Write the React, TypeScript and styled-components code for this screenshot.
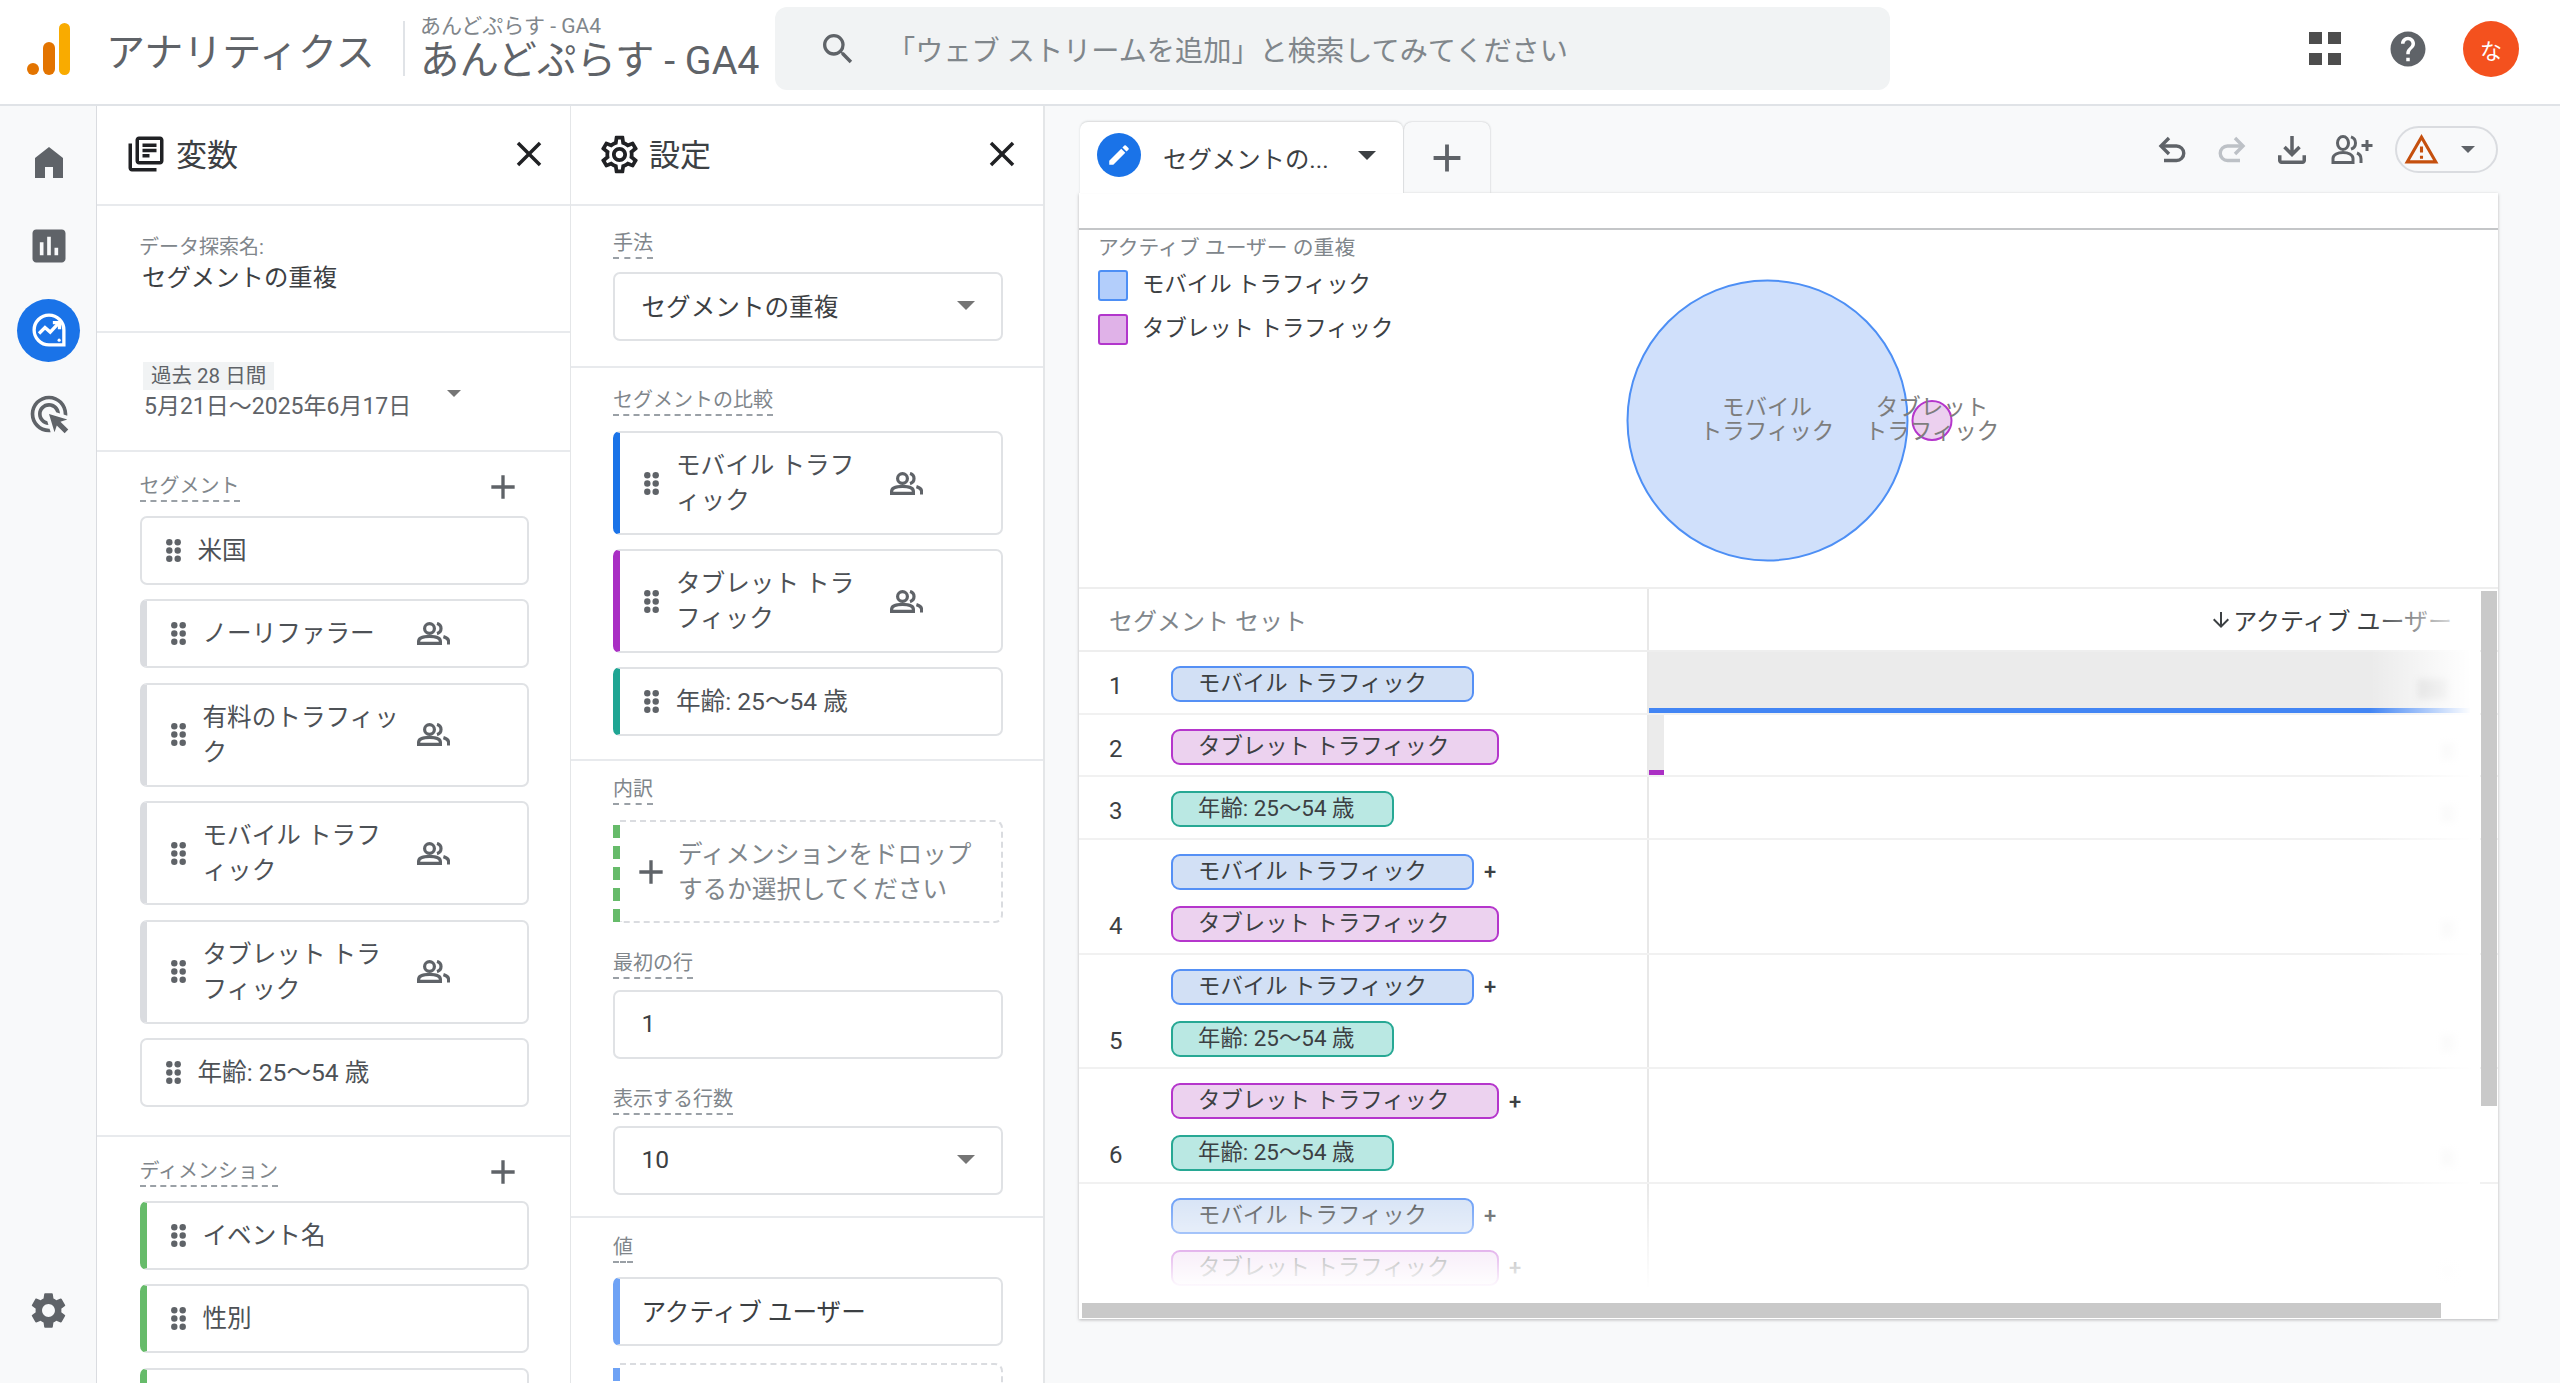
import React, { FC, ReactNode } from 'react';
import styled, { createGlobalStyle, css } from 'styled-components';
import {
  MdInsertChart,
  MdSettings,
  MdClose,
  MdAdd,
  MdSearch,
  MdHelp,
  MdOutlineFileDownload,
  MdOutlineLibraryBooks,
  MdOutlineSettings,
  MdEdit,
  MdArrowDownward,
  MdOutlineWarningAmber,
} from 'react-icons/md';

const GlobalStyle = createGlobalStyle`
  html, body {
    margin: 0;
    padding: 0;
    width: 2560px;
    height: 1383px;
    overflow: hidden;
    background: #fff;
    font-family: Roboto, "Noto Sans CJK JP", sans-serif;
    color: #3c4043;
  }
  * { box-sizing: border-box; }
`;

const Page = styled.div`
  display: flex;
  flex-direction: column;
  width: 2560px;
  height: 1383px;
  overflow: hidden;
`;

/* top bar */
const TopBar = styled.header`
  display: flex;
  align-items: center;
  flex: 0 0 106px;
  padding: 0 41px 7px 27px;
  border-bottom: 2px solid #e0e3e7;
`;

const ProductName = styled.div`
  margin-left: 36px;
  width: 297px;
  font-size: 39px;
  color: #5f6368;
  white-space: nowrap;
`;

const TopDivider = styled.div`
  width: 2px;
  height: 55px;
  background: #e0e3e7;
`;

const Account = styled.div`
  display: flex;
  flex-direction: column;
  width: 370px;
  padding-left: 15px;
`;

const AccountSmall = styled.div`
  font-size: 21px;
  line-height: 24px;
  color: #80868b;
  white-space: nowrap;
`;

const AccountBig = styled.div`
  font-size: 39.4px;
  line-height: 46px;
  color: #5f6368;
  white-space: nowrap;
`;

const SearchBox = styled.div`
  display: flex;
  align-items: center;
  width: 1115px;
  height: 83px;
  padding-left: 43px;
  background: #f1f3f4;
  border-radius: 12px;
  color: #5f6368;
`;

const SearchText = styled.span`
  margin-left: 29px;
  font-size: 28.2px;
  color: #80868b;
  white-space: nowrap;
`;

const TopRight = styled.div`
  display: flex;
  align-items: center;
  margin-left: auto;
  color: #5f6368;
`;

const HelpIcon = styled(MdHelp)`
  margin: 0 34px 0 46px;
`;

const Avatar = styled.div`
  display: flex;
  align-items: center;
  justify-content: center;
  width: 56px;
  height: 56px;
  border-radius: 50%;
  background: #f4511e;
  color: #fff;
  font-size: 22px;
`;

/* body */
const Body = styled.div`
  display: flex;
  flex: 1;
  min-height: 0;
`;

const Rail = styled.nav`
  display: flex;
  flex-direction: column;
  flex: 0 0 97px;
  padding: 14px 0 31px 1px;
  background: #f8f9fa;
  border-right: 1px solid #dadce0;
  color: #5f6368;
`;

const RailSlot = styled.div<{ $bottom?: boolean }>`
  display: flex;
  align-items: center;
  justify-content: center;
  flex: 0 0 84px;
  ${(p) => p.$bottom && css`margin-top: auto;`}
`;

const ActiveCircle = styled.div`
  display: flex;
  align-items: center;
  justify-content: center;
  width: 63px;
  height: 63px;
  border-radius: 50%;
  background: #1a73e8;
`;

const SidePanel = styled.section<{ $w: number; $line: number }>`
  flex: 0 0 ${(p) => p.$w}px;
  height: 100%;
  overflow: hidden;
  background: #fff;
  border-right: ${(p) => p.$line}px solid #e4e6e8;
`;

const PanelHead = styled.div`
  display: flex;
  align-items: center;
  height: 100px;
  padding: 0 20px 2px 28px;
  border-bottom: 2px solid #e8eaed;
  color: #202124;
`;

const PanelTitle = styled.h2`
  flex: 1;
  margin: 0 0 4px 9px;
  font-size: 31px;
  font-weight: 400;
  color: #3c4043;
`;

const GearIcon = styled(MdOutlineSettings)`
  margin: 0 -2px;
`;

const Section = styled.div<{ $pt: number; $pb: number; $pl?: number; $pr?: number; $line?: boolean }>`
  padding: ${(p) => p.$pt}px ${(p) => p.$pr ?? 40}px ${(p) => p.$pb}px ${(p) => p.$pl ?? 42}px;
  ${(p) => p.$line && css`border-bottom: 2px solid #e8eaed;`}
`;

const SmallLabel = styled.div`
  font-size: 20px;
  line-height: 26px;
  color: #80868b;
`;

const ExploreName = styled.div`
  margin: 1px 0 2px 3px;
  font-size: 24.4px;
  line-height: 34px;
  color: #3c4043;
`;

const RangeChip = styled.div`
  width: fit-content;
  height: 28px;
  margin-left: 4px;
  padding: 0 8px;
  background: #f1f3f4;
  font-size: 20.5px;
  line-height: 28px;
  color: #5f6368;
`;

const DateRow = styled.div`
  display: flex;
  align-items: center;
  margin-left: 5px;
  font-size: 23px;
  line-height: 30px;
  color: #5f6368;
  white-space: nowrap;
`;

const Caret = styled.span<{ $w?: number; $color?: string }>`
  display: inline-block;
  flex: none;
  border-left: ${(p) => p.$w ?? 8}px solid transparent;
  border-right: ${(p) => p.$w ?? 8}px solid transparent;
  border-top: ${(p) => p.$w ?? 8}px solid ${(p) => p.$color ?? '#757575'};
`;

const DateCaret = styled(Caret)`
  margin: 0 0 26px 36px;
`;

const FieldHead = styled.div`
  display: flex;
  justify-content: space-between;
  height: 30px;
  margin-bottom: 14px;
`;

const FieldLabel = styled.div<{ $mt?: number; $mb?: number }>`
  width: fit-content;
  height: 30px;
  margin-top: ${(p) => p.$mt ?? 0}px;
  margin-bottom: ${(p) => p.$mb ?? 11}px;
  font-size: 20px;
  line-height: 28px;
  color: #80868b;
  white-space: nowrap;
  border-bottom: 2px dashed #9aa0a6;
`;

const HeadLabel = styled(FieldLabel)`
  margin-bottom: 0;
`;

const PlusIcon = styled(MdAdd)`
  align-self: center;
  margin-right: 6px;
  color: #5f6368;
`;

const CardList = styled.div<{ $gap: number }>`
  display: flex;
  flex-direction: column;
  gap: ${(p) => p.$gap}px;
`;

const Card = styled.div<{ $bar?: string }>`
  display: flex;
  align-items: center;
  padding: 15px 0 15px 24px;
  background: #fff;
  border: 2px solid #e0e2e5;
  border-left: ${(p) => (p.$bar ? `7px solid ${p.$bar}` : '2px solid #e0e2e5')};
  border-radius: 7px;
  color: #4d5156;
`;

const CardText = styled.div`
  flex: 0 0 206px;
  margin-left: 17px;
  font-size: 24.6px;
  line-height: 35px;
  white-space: nowrap;
`;

const SelectBox = styled.div<{ $bar?: string }>`
  display: flex;
  align-items: center;
  justify-content: space-between;
  height: 69px;
  padding: 0 26px 3px ${(p) => (p.$bar ? 21.5 : 26.5)}px;
  background: #fff;
  border: 2px solid #e0e2e5;
  border-left: ${(p) => (p.$bar ? `7px solid ${p.$bar}` : '2px solid #e0e2e5')};
  border-radius: 7px;
  font-size: 24.6px;
  color: #3c4043;
`;

const DropZone = styled.div<{ $h: number; $mt?: number }>`
  display: flex;
  align-items: stretch;
  height: ${(p) => p.$h}px;
  margin-top: ${(p) => p.$mt ?? 0}px;
`;

const DashBar = styled.div<{ $color: string }>`
  flex: 0 0 7px;
  margin-top: 5px;
  background: repeating-linear-gradient(
    to bottom,
    ${(p) => p.$color} 0 13px,
    transparent 13px 21px
  );
`;

const DropBody = styled.div`
  display: flex;
  align-items: center;
  flex: 1;
  padding-left: 11px;
  border: 2px dashed #dadce0;
  border-left: 0;
  border-radius: 0 8px 8px 0;
  color: #5f6368;
`;

const DropText = styled.div`
  margin-left: 7px;
  font-size: 24.6px;
  line-height: 35px;
  color: #80868b;
  white-space: nowrap;
`;

/* main area */
const Main = styled.main`
  flex: 1;
  min-width: 0;
  padding: 16px 62px 0 34px;
  background: #f8f9fa;
`;

const TabRow = styled.div`
  display: flex;
  align-items: flex-start;
  height: 71px;
`;

const ActiveTab = styled.div`
  position: relative;
  z-index: 1;
  display: flex;
  align-items: center;
  width: 323px;
  height: 71px;
  margin-left: 1px;
  padding: 0 27px 5px 17px;
  background: #fff;
  border-radius: 8px 8px 0 0;
  box-shadow: 0 -1px 2px rgba(60, 64, 67, 0.18);
`;

const PencilCircle = styled.div`
  display: flex;
  align-items: center;
  justify-content: center;
  flex: none;
  width: 44px;
  height: 44px;
  border-radius: 50%;
  background: #1a73e8;
  color: #fff;
`;

const TabText = styled.span`
  flex: 1;
  margin: 4px 0 0 22px;
  font-size: 24.4px;
  color: #3c4043;
  white-space: nowrap;
`;

const AddTab = styled.div`
  display: flex;
  align-items: center;
  justify-content: center;
  width: 86px;
  height: 71px;
  margin-left: 1px;
  background: #f8f9fa;
  border-radius: 8px 8px 0 0;
  box-shadow: 0 0 2px rgba(60, 64, 67, 0.35);
  color: #5f6368;
`;

const Toolbar = styled.div`
  display: flex;
  align-items: center;
  height: 47px;
  margin: 4px 0 0 auto;
  color: #5f6368;
`;

const ToolSlot = styled.div<{ $off?: boolean }>`
  display: flex;
  align-items: center;
  justify-content: center;
  width: 60px;
  color: ${(p) => (p.$off ? '#bdc1c6' : '#5f6368')};
`;

const StatusPill = styled.div`
  display: flex;
  align-items: center;
  width: 103px;
  height: 47px;
  margin-left: 13px;
  padding-left: 6px;
  border: 2px solid #dadce0;
  border-radius: 24px;
  color: #c5500e;
`;

const PillCaret = styled(Caret)`
  margin-left: 21px;
`;

const ChartCard = styled.div`
  position: relative;
  height: 1126px;
  overflow: hidden;
  background: #fff;
  box-shadow: 0 1px 3px rgba(60, 64, 67, 0.35);
`;

const TopStrip = styled.div`
  height: 37px;
  border-bottom: 2px solid #c4c6c8;
`;

const VennArea = styled.div`
  display: flex;
  height: 359px;
  border-bottom: 2px solid #eeeeee;
`;

const LegendCol = styled.div`
  flex: 0 0 440px;
  padding: 7px 0 0 19px;
`;

const LegendTitle = styled.div`
  margin-bottom: 11px;
  font-size: 20.8px;
  line-height: 22px;
  color: #80868b;
  white-space: nowrap;
`;

const LegendItem = styled.div`
  display: flex;
  align-items: center;
  gap: 14px;
  height: 31px;
  margin-bottom: 13px;
  font-size: 22.4px;
  line-height: 28px;
  color: #3c4043;
  white-space: nowrap;
`;

const LegendLabel = styled.span`
  margin-bottom: 3px;
`;

const Swatch = styled.span<{ $fill: string; $line: string }>`
  flex: 0 0 30px;
  height: 31px;
  background: ${(p) => p.$fill};
  border: 2px solid ${(p) => p.$line};
  border-radius: 3px;
`;

const VennText = styled.text`
  font-size: 22.5px;
  fill: #7d7d7d;
  text-anchor: middle;
`;

const SetTable = styled.div`
  position: relative;
`;

const HeadRow = styled.div`
  display: grid;
  grid-template-columns: 568px 1fr;
  height: 63px;
  border-bottom: 2px solid #eeeeee;
`;

const SetHead = styled.div`
  display: flex;
  align-items: center;
  padding-left: 30px;
  font-size: 24px;
  color: #80868b;
`;

const MetricHead = styled.div`
  display: flex;
  align-items: center;
  justify-content: flex-end;
  padding-right: 46px;
  border-left: 2px solid #e8e8e8;
  font-size: 24px;
  color: #3c4043;
  white-space: nowrap;
`;

const DataRow = styled.div`
  display: grid;
  grid-template-columns: 568px 1fr;
  border-bottom: 2px solid #f1f1f1;
`;

const SetCell = styled.div`
  display: flex;
  align-items: flex-end;
  padding: 14px 0 10.67px 30px;
`;

const RowNum = styled.div`
  flex: 0 0 62px;
  margin-bottom: -2px;
  font-size: 24px;
  line-height: 36px;
  color: #3c4043;
`;

const ChipStack = styled.div`
  display: flex;
  flex-direction: column;
  gap: 16px;
`;

const ChipLine = styled.div`
  display: flex;
  align-items: center;
`;

type ChipKind = 'mobile' | 'tablet' | 'age';

const chipLook: Record<ChipKind, { w: number; fill: string; line: string; text: string }> = {
  mobile: { w: 303, fill: '#d2e0f5', line: '#5590f5', text: 'モバイル トラフィック' },
  tablet: { w: 328, fill: '#ecd2ef', line: '#b536cc', text: 'タブレット トラフィック' },
  age: { w: 223, fill: '#bae8e3', line: '#27a894', text: '年齢: 25〜54 歳' },
};

const Chip = styled.div<{ $kind: ChipKind }>`
  width: ${(p) => chipLook[p.$kind].w}px;
  height: 36px;
  padding-left: 25px;
  background: ${(p) => chipLook[p.$kind].fill};
  border: 2px solid ${(p) => chipLook[p.$kind].line};
  border-radius: 9px;
  font-size: 22.4px;
  line-height: 30px;
  color: #3c4043;
  white-space: nowrap;
`;

const ChipPlus = styled.span`
  margin-left: 10px;
  font-size: 22px;
  font-weight: 500;
  color: #3c4043;
`;

const MetricCell = styled.div`
  position: relative;
  padding-right: 28px;
  border-left: 2px solid #e8e8e8;
`;

const BarFill = styled.div<{ $color: string }>`
  height: 100%;
  background: #ebebeb;
  border-bottom: 5px solid ${(p) => p.$color};
`;

const BlurValue = styled.span<{ $strong?: boolean }>`
  position: absolute;
  right: ${(p) => (p.$strong ? 50 : 42)}px;
  bottom: ${(p) => (p.$strong ? 14 : 16)}px;
  width: ${(p) => (p.$strong ? 30 : 14)}px;
  height: ${(p) => (p.$strong ? 20 : 16)}px;
  background: ${(p) => (p.$strong ? '#cfcfcf' : '#ededed')};
  filter: blur(3px);
`;

const FadeRight = styled.div`
  position: absolute;
  top: 0;
  bottom: 0;
  right: 18px;
  width: 110px;
  background: linear-gradient(to right, rgba(255, 255, 255, 0), #fff 92%);
  pointer-events: none;
`;

const FadeBottom = styled.div`
  position: absolute;
  left: 0;
  right: 0;
  top: 991px;
  height: 135px;
  background: linear-gradient(to bottom, rgba(255, 255, 255, 0), #fff 78%);
  pointer-events: none;
`;

const ScrollX = styled.div`
  position: absolute;
  left: 3px;
  bottom: 1px;
  width: 1359px;
  height: 15px;
  background: #c9c9c9;
`;

const ScrollY = styled.div`
  position: absolute;
  right: 1px;
  top: 398px;
  width: 16px;
  height: 515px;
  background: #c9c9c9;
`;

/* drawn icons */
const Logo: FC = () => (
  <svg width="43" height="52" viewBox="0 0 43 52">
    <rect x="32" width="11" height="52" rx="5.5" fill="#f9ab00" />
    <rect x="16" y="19" width="12" height="33" rx="6" fill="#e37400" />
    <circle cx="6" cy="46" r="6" fill="#e37400" />
  </svg>
);

const AppsIcon: FC = () => (
  <svg width="32" height="33" viewBox="0 0 32 33" fill="#4d4d4d">
    <rect width="13" height="12" />
    <rect x="19" width="13" height="12" />
    <rect y="21" width="13" height="12" />
    <rect x="19" y="21" width="13" height="12" />
  </svg>
);

const HomeIcon: FC = () => (
  <svg width="28" height="31" viewBox="0 0 28 31" fill="currentColor">
    <path d="M14 0l14 11v20H18V20h-8v11H0V11z" />
  </svg>
);

const ExploreIcon: FC = () => (
  <svg width="42" height="42" viewBox="0 0 24 24" fill="none" stroke="#fff" strokeWidth="1.9">
    <path d="M12 3.5a8.5 8.5 0 1 0 0 17h8.5V12A8.5 8.5 0 0 0 12 3.5z" />
    <path d="M6.3 14l3.4-3.4 3 2.6 4.4-4.7" />
    <path d="M14.2 7.8h3.8v3.8" />
    <circle cx="17.8" cy="17.8" r="0.9" fill="#fff" stroke="none" />
  </svg>
);

const AdsIcon: FC = () => (
  <svg width="44" height="44" viewBox="0 0 24 24" fill="currentColor">
    <path d="M11.71 17.99C8.53 17.84 6 15.22 6 12c0-3.31 2.69-6 6-6 3.22 0 5.84 2.53 5.99 5.71l-2.1-.63C15.48 9.31 13.89 8 12 8c-2.21 0-4 1.79-4 4 0 1.89 1.31 3.48 3.08 3.89l.63 2.1zM22 12c0 .3-.01.6-.04.9l-1.97-.59C20 12.21 20 12.1 20 12c0-4.42-3.58-8-8-8s-8 3.58-8 8 3.58 8 8 8c.1 0 .21 0 .31-.01l.59 1.97c-.3.03-.6.04-.9.04-5.52 0-10-4.48-10-10S6.48 2 12 2s10 4.48 10 10zm-3.77 4.26L22 15l-10-3 3 10 1.26-3.77 4.27 4.27 1.98-1.98-4.28-4.26z" />
  </svg>
);

const DragDots: FC = () => (
  <svg width="15" height="23" viewBox="0 0 15 23" fill="#5f6368" style={{ flex: 'none' }}>
    {[3.3, 11.5, 19.7].map((y) => (
      <React.Fragment key={y}>
        <circle cx="3.3" cy={y} r="3.2" />
        <circle cx="11.7" cy={y} r="3.2" />
      </React.Fragment>
    ))}
  </svg>
);

const PeopleIcon: FC = () => (
  <svg
    width="33"
    height="23"
    viewBox="0 0 33 23"
    fill="none"
    stroke="#5f6368"
    strokeWidth="3.2"
    style={{ flex: 'none', marginLeft: 8 }}
  >
    <circle cx="12.5" cy="6.5" r="4.9" />
    <path d="M1.6 21.4v-2c0-3.6 5-5.1 10.9-5.1s10.9 1.5 10.9 5.1v2z" />
    <path d="M20 1.4c2.6.8 4 2.8 4 5.1s-1.4 4.3-4 5.1" />
    <path d="M26.4 14.6c3.4 1 5.2 2.6 5.2 5v3" />
  </svg>
);

const UndoIcon: FC<{ flip?: boolean }> = ({ flip }) => (
  <svg
    width="30"
    height="27"
    viewBox="0 0 30 27"
    fill="none"
    stroke="currentColor"
    strokeWidth="3.4"
    style={flip ? { transform: 'scaleX(-1)' } : undefined}
  >
    <path d="M12 2L4 10l8 8" />
    <path d="M4 10h15.5a7 7 0 0 1 0 14.5H7" />
  </svg>
);

const ShareIcon: FC = () => (
  <svg width="42" height="29" viewBox="0 0 42 29" fill="none" stroke="currentColor" strokeWidth="3">
    <ellipse cx="12" cy="8" rx="5.5" ry="6.5" />
    <path d="M2 27.5v-4c0-4 5-6 10-6s10 2 10 6v4z" />
    <path d="M20 1.8c3 1 4.5 3.4 4.5 6.2s-1.5 5.2-4.5 6.2" />
    <path d="M26 18c2.6 1 4 3 4 6v4" />
    <path d="M36 5v11M30.5 10.5h11" />
  </svg>
);

/* data */
type Seg = { text: ReactNode; bar?: string; people?: boolean };

const segments: Seg[] = [
  { text: '米国' },
  { text: 'ノーリファラー', bar: '#dadce0', people: true },
  { text: <>有料のトラフィッ<br />ク</>, bar: '#dadce0', people: true },
  { text: <>モバイル トラフ<br />ィック</>, bar: '#dadce0', people: true },
  { text: <>タブレット トラ<br />フィック</>, bar: '#dadce0', people: true },
  { text: '年齢: 25〜54 歳' },
];

const dimensions: Seg[] = [
  { text: 'イベント名', bar: '#66bb6a' },
  { text: '性別', bar: '#66bb6a' },
  { text: '\u00a0', bar: '#66bb6a' },
];

const compare: Seg[] = [
  { text: <>モバイル トラフ<br />ィック</>, bar: '#1a73e8', people: true },
  { text: <>タブレット トラ<br />フィック</>, bar: '#a92fc4', people: true },
  { text: '年齢: 25〜54 歳', bar: '#1fa593' },
];

const rows: { n: number; chips: ChipKind[]; bar?: { pct: number; color: string } }[] = [
  { n: 1, chips: ['mobile'], bar: { pct: 100, color: '#4285f4' } },
  { n: 2, chips: ['tablet'], bar: { pct: 1.8, color: '#ab2fc4' } },
  { n: 3, chips: ['age'] },
  { n: 4, chips: ['mobile', 'tablet'] },
  { n: 5, chips: ['mobile', 'age'] },
  { n: 6, chips: ['tablet', 'age'] },
  { n: 7, chips: ['mobile', 'tablet'] },
];

const SegCard: FC<{ seg: Seg }> = ({ seg }) => (
  <Card $bar={seg.bar}>
    <DragDots />
    <CardText>{seg.text}</CardText>
    {seg.people && <PeopleIcon />}
  </Card>
);

const App: FC = () => {
  return (
    <Page>
      <GlobalStyle />
      <TopBar>
        <Logo />
        <ProductName>アナリティクス</ProductName>
        <TopDivider />
        <Account>
          <AccountSmall>あんどぷらす - GA4</AccountSmall>
          <AccountBig>あんどぷらす - GA4</AccountBig>
        </Account>
        <SearchBox>
          <MdSearch size={40} />
          <SearchText>「ウェブ ストリームを追加」と検索してみてください</SearchText>
        </SearchBox>
        <TopRight>
          <AppsIcon />
          <HelpIcon size={42} />
          <Avatar>な</Avatar>
        </TopRight>
      </TopBar>

      <Body>
        <Rail>
          <RailSlot><HomeIcon /></RailSlot>
          <RailSlot><MdInsertChart size={44} /></RailSlot>
          <RailSlot><ActiveCircle><ExploreIcon /></ActiveCircle></RailSlot>
          <RailSlot><AdsIcon /></RailSlot>
          <RailSlot $bottom><MdSettings size={43} /></RailSlot>
        </Rail>

        <SidePanel $w={474} $line={1}>
          <PanelHead>
            <MdOutlineLibraryBooks size={42} />
            <PanelTitle>変数</PanelTitle>
            <MdClose size={42} />
          </PanelHead>
          <Section $pt={28} $pb={34} $line>
            <SmallLabel>データ探索名:</SmallLabel>
            <ExploreName>セグメントの重複</ExploreName>
          </Section>
          <Section $pt={29} $pb={27} $line>
            <RangeChip>過去 28 日間</RangeChip>
            <DateRow>
              5月21日〜2025年6月17日
              <DateCaret $w={7} />
            </DateRow>
          </Section>
          <Section $pt={20} $pb={28} $pr={41} $pl={42.5} $line>
            <FieldHead>
              <HeadLabel>セグメント</HeadLabel>
              <PlusIcon size={40} />
            </FieldHead>
            <CardList $gap={14.4}>
              {segments.map((s, i) => <SegCard key={i} seg={s} />)}
            </CardList>
          </Section>
          <Section $pt={20} $pb={28} $pr={41} $pl={42.5}>
            <FieldHead>
              <HeadLabel>ディメンション</HeadLabel>
              <PlusIcon size={40} />
            </FieldHead>
            <CardList $gap={14.4}>
              {dimensions.map((s, i) => <SegCard key={i} seg={s} />)}
            </CardList>
          </Section>
        </SidePanel>

        <SidePanel $w={474} $line={2}>
          <PanelHead>
            <GearIcon size={45} />
            <PanelTitle>設定</PanelTitle>
            <MdClose size={42} />
          </PanelHead>
          <Section $pt={23} $pb={25} $line>
            <FieldLabel $mb={13}>手法</FieldLabel>
            <SelectBox>
              セグメントの重複
              <Caret $w={9} />
            </SelectBox>
          </Section>
          <Section $pt={18} $pb={23} $line>
            <FieldLabel $mb={15}>セグメントの比較</FieldLabel>
            <CardList $gap={14}>
              {compare.map((s, i) => <SegCard key={i} seg={s} />)}
            </CardList>
          </Section>
          <Section $pt={14} $pb={21} $line>
            <FieldLabel $mb={15}>内訳</FieldLabel>
            <DropZone $h={103}>
              <DashBar $color="#66bb6a" />
              <DropBody>
                <MdAdd size={40} />
                <DropText>ディメンションをドロップ<br />するか選択してください</DropText>
              </DropBody>
            </DropZone>
            <FieldLabel $mt={26}>最初の行</FieldLabel>
            <SelectBox>1</SelectBox>
            <FieldLabel $mt={26}>表示する行数</FieldLabel>
            <SelectBox>
              10
              <Caret $w={9} />
            </SelectBox>
          </Section>
          <Section $pt={15} $pb={0}>
            <FieldLabel $mb={14}>値</FieldLabel>
            <SelectBox $bar="#6ea2f5">アクティブ ユーザー</SelectBox>
            <DropZone $h={100} $mt={17}>
              <DashBar $color="#6ea2f5" />
              <DropBody />
            </DropZone>
          </Section>
        </SidePanel>

        <Main>
          <TabRow>
            <ActiveTab>
              <PencilCircle><MdEdit size={26} /></PencilCircle>
              <TabText>セグメントの...</TabText>
              <Caret $w={9} $color="#3c4043" />
            </ActiveTab>
            <AddTab><MdAdd size={46} /></AddTab>
            <Toolbar>
              <ToolSlot><UndoIcon /></ToolSlot>
              <ToolSlot $off><UndoIcon flip /></ToolSlot>
              <ToolSlot><MdOutlineFileDownload size={42} /></ToolSlot>
              <ToolSlot><ShareIcon /></ToolSlot>
              <StatusPill>
                <MdOutlineWarningAmber size={37} />
                <PillCaret $w={7} $color="#5f6368" />
              </StatusPill>
            </Toolbar>
          </TabRow>

          <ChartCard>
            <TopStrip />
            <VennArea>
              <LegendCol>
                <LegendTitle>アクティブ ユーザー の重複</LegendTitle>
                <LegendItem>
                  <Swatch $fill="#b3cefb" $line="#4d8ff5" />
                  <LegendLabel>モバイル トラフィック</LegendLabel>
                </LegendItem>
                <LegendItem>
                  <Swatch $fill="#e0b2e8" $line="#b236cc" />
                  <LegendLabel>タブレット トラフィック</LegendLabel>
                </LegendItem>
              </LegendCol>
              <svg width="520" height="357" viewBox="0 0 520 357">
                <circle cx="248.5" cy="190.5" r="140" fill="#d0e0fb" stroke="#4d8ff5" strokeWidth="2" />
                <circle cx="413" cy="190.5" r="19.5" fill="#ecd0ef" stroke="#b536cc" strokeWidth="2" />
                <VennText x="248" y="185">モバイル</VennText>
                <VennText x="248" y="209">トラフィック</VennText>
                <VennText x="413" y="185">タブレット</VennText>
                <VennText x="413" y="209">トラフィック</VennText>
              </svg>
            </VennArea>
            <SetTable>
              <HeadRow>
                <SetHead>セグメント セット</SetHead>
                <MetricHead>
                  <MdArrowDownward size={24} />
                  アクティブ ユーザー
                </MetricHead>
              </HeadRow>
              {rows.map((r) => (
                <DataRow key={r.n}>
                  <SetCell>
                    <RowNum>{r.n < 7 ? r.n : ''}</RowNum>
                    <ChipStack>
                      {r.chips.map((c, i) => (
                        <ChipLine key={c}>
                          <Chip $kind={c}>{chipLook[c].text}</Chip>
                          {(i < r.chips.length - 1 || r.n === 7) && <ChipPlus>+</ChipPlus>}
                        </ChipLine>
                      ))}
                    </ChipStack>
                  </SetCell>
                  <MetricCell>
                    {r.bar && <BarFill $color={r.bar.color} style={{ width: `${r.bar.pct}%` }} />}
                    <BlurValue $strong={r.n === 1} />
                  </MetricCell>
                </DataRow>
              ))}
              <FadeRight />
            </SetTable>
            <FadeBottom />
            <ScrollX />
            <ScrollY />
          </ChartCard>
        </Main>
      </Body>
    </Page>
  );
};

export default App;
